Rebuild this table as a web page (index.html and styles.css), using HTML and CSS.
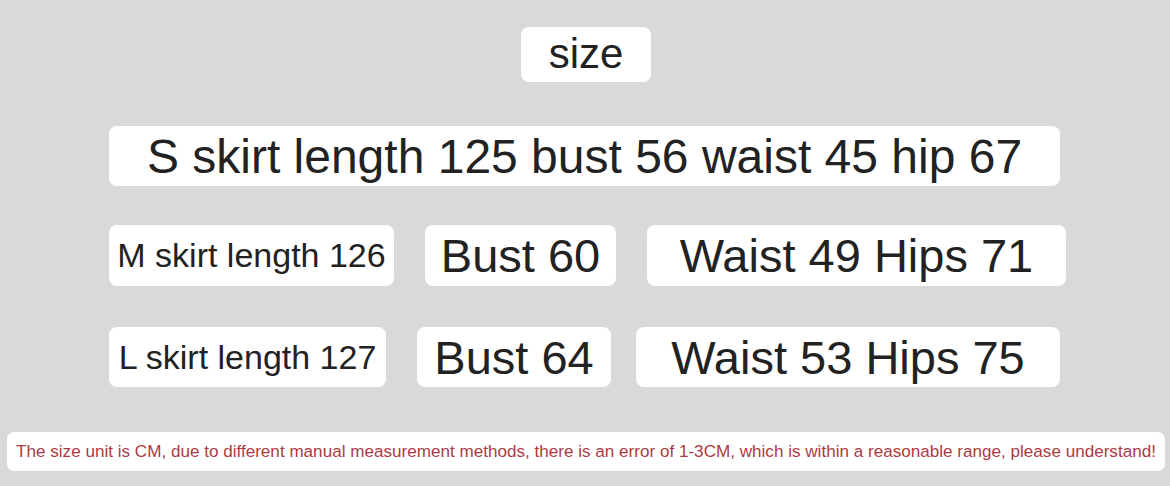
FILE: index.html
```html
<!DOCTYPE html>
<html>
<head>
<meta charset="utf-8">
<link rel="stylesheet" href="styles.css">
</head>
<body>
<div class="page">
  <div class="row row-title"><div class="box title">size</div></div>
  <div class="row row-s"><div class="box s-box">S skirt length 125 bust 56 waist 45 hip 67</div></div>
  <div class="row row-m">
    <div class="box small m1">M skirt length 126</div>
    <div class="box big m2">Bust 60</div>
    <div class="box big m3">Waist 49 Hips 71</div>
  </div>
  <div class="row row-l">
    <div class="box small l1">L skirt length 127</div>
    <div class="box big l2">Bust 64</div>
    <div class="box big l3">Waist 53 Hips 75</div>
  </div>
  <div class="row row-note"><div class="box note">The size unit is CM, due to different manual measurement methods, there is an error of 1-3CM, which is within a reasonable range, please understand!</div></div>
</div>
</body>
</html>
```
FILE: styles.css
```css
html, body {
  margin: 0;
  padding: 0;
  background: #d9d9d9;
}
body {
  width: 1170px;
  height: 486px;
  overflow: hidden;
  font-family: "Liberation Sans", Arial, sans-serif;
  color: #222;
}
.page {
  display: flex;
  flex-direction: column;
}
.row {
  display: flex;
}
.box {
  background: #fff;
  border-radius: 8px;
  display: flex;
  align-items: center;
  justify-content: center;
  white-space: nowrap;
  box-sizing: border-box;
}
.row-title {
  padding-top: 27px;
  padding-left: 521px;
}
.title {
  width: 130px;
  height: 55px;
  font-size: 42px;
  padding-bottom: 2px;
}
.row-s {
  padding-top: 44px;
  padding-left: 109px;
}
.s-box {
  width: 951px;
  height: 60px;
  font-size: 48px;
}
.row-m {
  padding-top: 39px;
  padding-left: 109px;
  gap: 31px;
}
.row-l {
  padding-top: 41px;
  padding-left: 109px;
}
.small {
  font-size: 34px;
}
.big {
  font-size: 47px;
}
.m1 { width: 285px; height: 61px; }
.m2 { width: 191px; height: 61px; }
.m3 { width: 419px; height: 61px; }
.l1 { width: 277px; height: 60px; }
.l2 { width: 194px; height: 60px; margin-left: 31px; }
.l3 { width: 424px; height: 60px; margin-left: 25px; }
.row-note {
  padding-top: 45px;
  padding-left: 7px;
}
.note {
  width: 1158px;
  height: 39px;
  font-size: 17.1px;
  color: #ad3a43;
  border-radius: 7px;
}
```
